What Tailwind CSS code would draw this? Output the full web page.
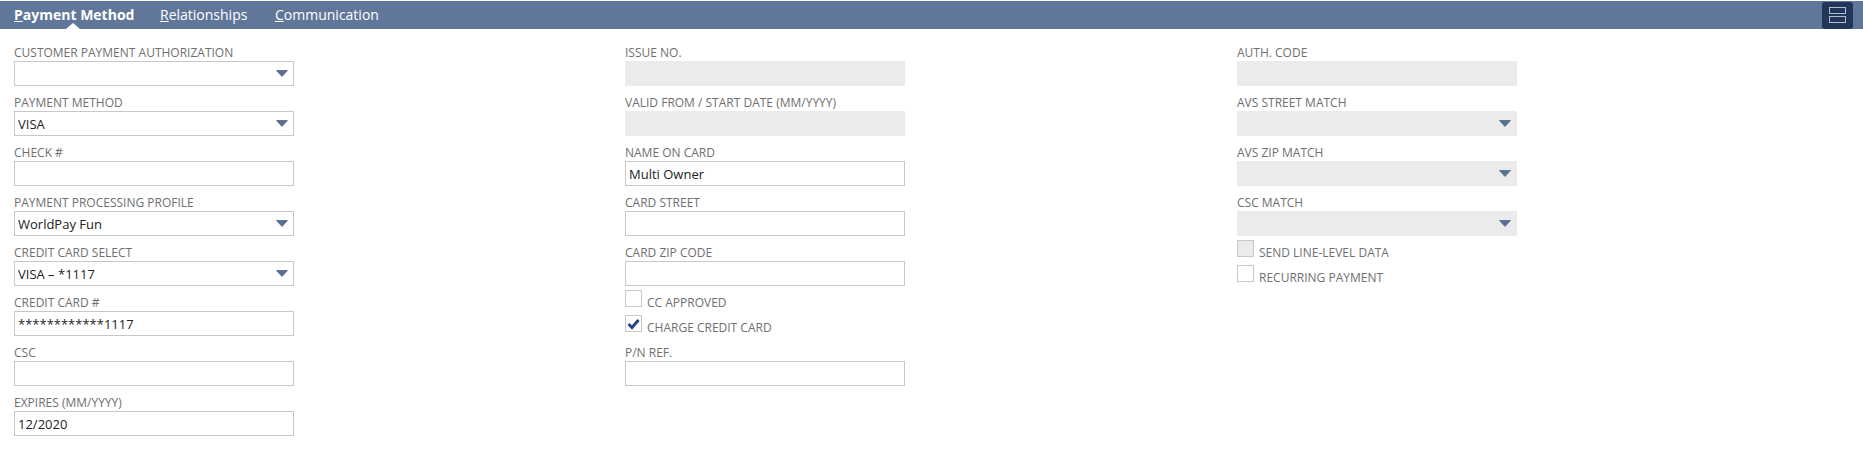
<!doctype html>
<html lang="en">
  <head>
    <script src="https://cdn.jsdelivr.net/npm/@tailwindcss/browser@4"></script>
    <meta charset="UTF-8" />
    <title>Payment Method</title>
  </head>
  <body class="bg-white font-['Open_Sans',sans-serif] h-[456px] overflow-hidden">
    <!-- Subtab bar -->
    <div class="mt-px h-[28px] bg-[#607799] flex items-center justify-between pl-[14px] pr-[10px]">
      <div class="flex items-center text-white text-[14px]">
        <a class="relative font-bold w-[146px] leading-[28px]"><span class="underline">P</span>ayment Method
          <span class="absolute left-[52px] bottom-0 w-0 h-0 border-x-[7px] border-x-transparent border-b-[6px] border-b-white"></span>
        </a>
        <a class="w-[115px] leading-[28px]"><span class="underline">R</span>elationships</a>
        <a class="leading-[28px]"><span class="underline">C</span>ommunication</a>
      </div>
      <div class="w-[31px] h-[27px] rounded-[3px] bg-[#22355a] flex flex-col items-center justify-center gap-[2px]">
        <span class="block w-[17px] h-[7px] border border-[#b5bcc6]"></span>
        <span class="block w-[17px] h-[7px] border border-[#b5bcc6]"></span>
      </div>
    </div>

    <div class="grid grid-cols-[611px_612px_1fr] pl-[14px] pt-[7px] text-[12px] text-[#6f6f6f]">
      <!-- Column 1 -->
      <div class="flex flex-col">
        <div class="pt-[6px] w-[280px]">
          <label class="block h-[19px] leading-[21px]">CUSTOMER PAYMENT AUTHORIZATION</label>
          <div class="relative h-[25px]">
            <select class="appearance-none block w-full h-full border border-[#c8c8c8] px-[3px] pt-[2px] text-[13px] text-[#222222]"><option></option></select>
            <svg viewBox="0 0 12 7" class="absolute right-[6px] top-[9px] w-[12px] h-[7px]"><path d="M.6 .6h10.8L6 6.4z" fill="#5a7093" stroke="#5a7093" stroke-linejoin="round" /></svg>
          </div>
        </div>
        <div class="pt-[6px] w-[280px]">
          <label class="block h-[19px] leading-[21px]">PAYMENT METHOD</label>
          <div class="relative h-[25px]">
            <select class="appearance-none block w-full h-full border border-[#c8c8c8] px-[3px] pt-[2px] text-[13px] text-[#222222]"><option>VISA</option></select>
            <svg viewBox="0 0 12 7" class="absolute right-[6px] top-[9px] w-[12px] h-[7px]"><path d="M.6 .6h10.8L6 6.4z" fill="#5a7093" stroke="#5a7093" stroke-linejoin="round" /></svg>
          </div>
        </div>
        <div class="pt-[6px] w-[280px]">
          <label class="block h-[19px] leading-[21px]">CHECK #</label>
          <input class="block w-full h-[25px] border border-[#c8c8c8] px-[3px] text-[13px] text-[#222222]" />
        </div>
        <div class="pt-[6px] w-[280px]">
          <label class="block h-[19px] leading-[21px]">PAYMENT PROCESSING PROFILE</label>
          <div class="relative h-[25px]">
            <select class="appearance-none block w-full h-full border border-[#c8c8c8] px-[3px] pt-[2px] text-[13px] text-[#222222]"><option>WorldPay Fun</option></select>
            <svg viewBox="0 0 12 7" class="absolute right-[6px] top-[9px] w-[12px] h-[7px]"><path d="M.6 .6h10.8L6 6.4z" fill="#5a7093" stroke="#5a7093" stroke-linejoin="round" /></svg>
          </div>
        </div>
        <div class="pt-[6px] w-[280px]">
          <label class="block h-[19px] leading-[21px]">CREDIT CARD SELECT</label>
          <div class="relative h-[25px]">
            <select class="appearance-none block w-full h-full border border-[#c8c8c8] px-[3px] pt-[2px] text-[13px] text-[#222222]"><option>VISA – *1117</option></select>
            <svg viewBox="0 0 12 7" class="absolute right-[6px] top-[9px] w-[12px] h-[7px]"><path d="M.6 .6h10.8L6 6.4z" fill="#5a7093" stroke="#5a7093" stroke-linejoin="round" /></svg>
          </div>
        </div>
        <div class="pt-[6px] w-[280px]">
          <label class="block h-[19px] leading-[21px]">CREDIT CARD #</label>
          <input class="block w-full h-[25px] border border-[#c8c8c8] px-[3px] text-[13px] text-[#222222]" value="************1117" />
        </div>
        <div class="pt-[6px] w-[280px]">
          <label class="block h-[19px] leading-[21px]">CSC</label>
          <input class="block w-full h-[25px] border border-[#c8c8c8] px-[3px] text-[13px] text-[#222222]" />
        </div>
        <div class="pt-[6px] w-[280px]">
          <label class="block h-[19px] leading-[21px]">EXPIRES (MM/YYYY)</label>
          <input class="block w-full h-[25px] border border-[#c8c8c8] px-[3px] text-[13px] text-[#222222]" value="12/2020" />
        </div>
      </div>

      <!-- Column 2 -->
      <div class="flex flex-col">
        <div class="pt-[6px] w-[280px]">
          <label class="block h-[19px] leading-[21px]">ISSUE NO.</label>
          <div class="h-[25px] bg-[#ebebeb]"></div>
        </div>
        <div class="pt-[6px] w-[280px]">
          <label class="block h-[19px] leading-[21px]">VALID FROM / START DATE (MM/YYYY)</label>
          <div class="h-[25px] bg-[#ebebeb]"></div>
        </div>
        <div class="pt-[6px] w-[280px]">
          <label class="block h-[19px] leading-[21px]">NAME ON CARD</label>
          <input class="block w-full h-[25px] border border-[#c8c8c8] px-[3px] text-[13px] text-[#222222]" value="Multi Owner" />
        </div>
        <div class="pt-[6px] w-[280px]">
          <label class="block h-[19px] leading-[21px]">CARD STREET</label>
          <input class="block w-full h-[25px] border border-[#c8c8c8] px-[3px] text-[13px] text-[#222222]" />
        </div>
        <div class="pt-[6px] w-[280px]">
          <label class="block h-[19px] leading-[21px]">CARD ZIP CODE</label>
          <input class="block w-full h-[25px] border border-[#c8c8c8] px-[3px] text-[13px] text-[#222222]" />
        </div>
        <div class="pt-[4px]">
          <div class="flex h-[25px] gap-[5px]">
            <span class="block w-[17px] h-[17px] border border-[#c8c8c8]"></span>
            <span class="leading-[23px] pt-[1px]">CC APPROVED</span>
          </div>
          <div class="flex h-[25px] gap-[5px]">
            <span class="block w-[17px] h-[17px] border border-[#c8c8c8]">
              <svg viewBox="0 0 15 15" class="w-[15px] h-[15px]"><path d="M2.5 8l3.5 3.5 6.5-7.5" fill="none" stroke="#24478a" stroke-width="3" /></svg>
            </span>
            <span class="leading-[23px] pt-[1px]">CHARGE CREDIT CARD</span>
          </div>
        </div>
        <div class="pt-[2px] w-[280px]">
          <label class="block h-[19px] leading-[21px]">P/N REF.</label>
          <input class="block w-full h-[25px] border border-[#c8c8c8] px-[3px] text-[13px] text-[#222222]" />
        </div>
      </div>

      <!-- Column 3 -->
      <div class="flex flex-col">
        <div class="pt-[6px] w-[280px]">
          <label class="block h-[19px] leading-[21px]">AUTH. CODE</label>
          <div class="h-[25px] bg-[#ebebeb]"></div>
        </div>
        <div class="pt-[6px] w-[280px]">
          <label class="block h-[19px] leading-[21px]">AVS STREET MATCH</label>
          <div class="relative h-[25px] bg-[#ebebeb]">
            <svg viewBox="0 0 12 7" class="absolute right-[6px] top-[9px] w-[12px] h-[7px]"><path d="M.6 .6h10.8L6 6.4z" fill="#5a7093" stroke="#5a7093" stroke-linejoin="round" /></svg>
          </div>
        </div>
        <div class="pt-[6px] w-[280px]">
          <label class="block h-[19px] leading-[21px]">AVS ZIP MATCH</label>
          <div class="relative h-[25px] bg-[#ebebeb]">
            <svg viewBox="0 0 12 7" class="absolute right-[6px] top-[9px] w-[12px] h-[7px]"><path d="M.6 .6h10.8L6 6.4z" fill="#5a7093" stroke="#5a7093" stroke-linejoin="round" /></svg>
          </div>
        </div>
        <div class="pt-[6px] w-[280px]">
          <label class="block h-[19px] leading-[21px]">CSC MATCH</label>
          <div class="relative h-[25px] bg-[#ebebeb]">
            <svg viewBox="0 0 12 7" class="absolute right-[6px] top-[9px] w-[12px] h-[7px]"><path d="M.6 .6h10.8L6 6.4z" fill="#5a7093" stroke="#5a7093" stroke-linejoin="round" /></svg>
          </div>
        </div>
        <div class="pt-[4px]">
          <div class="flex h-[25px] gap-[5px]">
            <span class="block w-[17px] h-[17px] border border-[#c8c8c8] bg-[#ebebeb]"></span>
            <span class="leading-[23px] pt-[1px]">SEND LINE-LEVEL DATA</span>
          </div>
          <div class="flex h-[25px] gap-[5px]">
            <span class="block w-[17px] h-[17px] border border-[#c8c8c8]"></span>
            <span class="leading-[23px] pt-[1px]">RECURRING PAYMENT</span>
          </div>
        </div>
      </div>
    </div>
  </body>
</html>
